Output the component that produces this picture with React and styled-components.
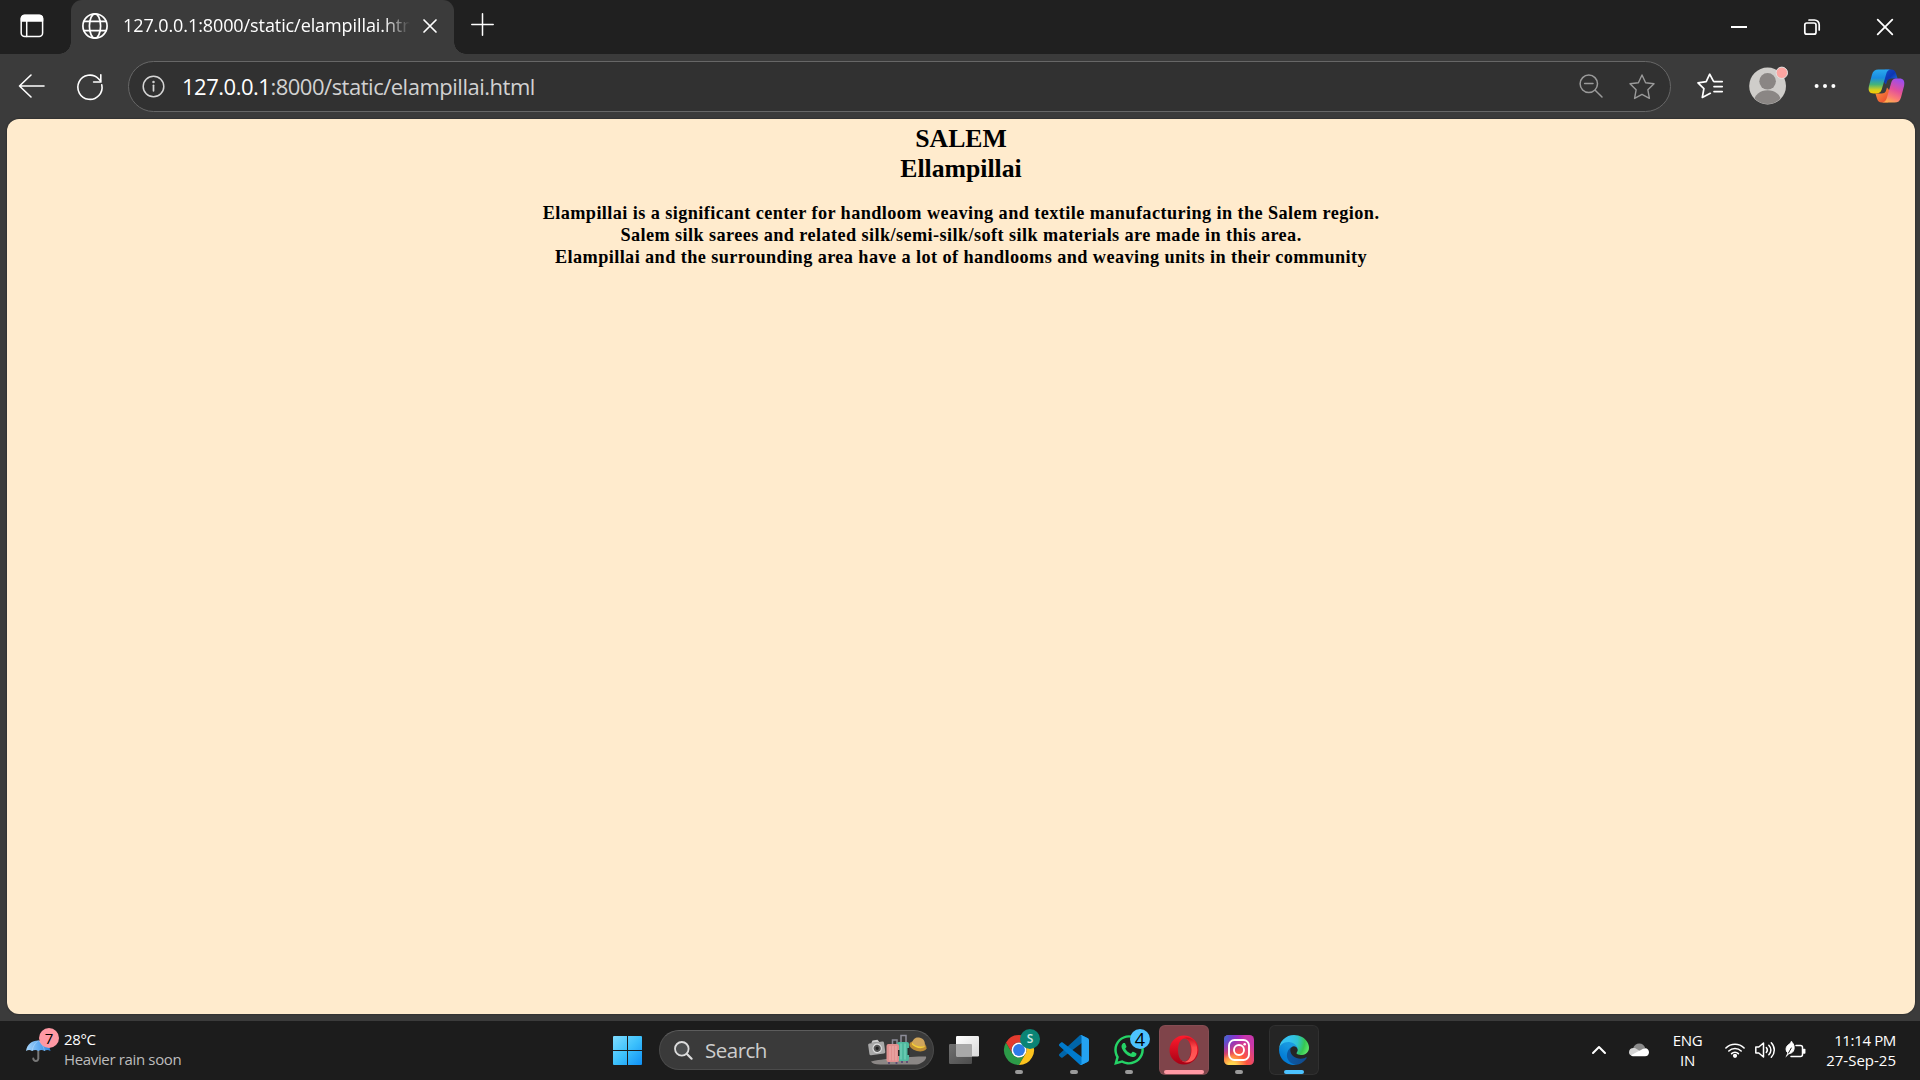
import React from "react";
import styled, { createGlobalStyle, css } from "styled-components";
import { FaWhatsapp } from "react-icons/fa";

const GlobalStyle = createGlobalStyle`
  * { box-sizing: border-box; }
  body { margin: 0; background: #3b3b3b; overflow: hidden; }
  svg { display: block; flex: none; overflow: visible; }
`;

const Screen = styled.div`
  display: flex;
  flex-direction: column;
  width: 1920px;
  height: 1080px;
  background: #3b3b3b;
  font-family: "Open Sans", "Noto Sans", sans-serif;
  color: #fff;
`;

/* ---------- tab strip ---------- */

const TabStrip = styled.header`
  display: flex;
  align-items: stretch;
  height: 54px;
  background: #202020;
`;

const StripButton = styled.button`
  display: flex;
  align-items: center;
  justify-content: center;
  width: ${(p) => p.$width}px;
  padding: ${(p) => p.$pad || "0"};
  border: 0;
  background: none;
  color: #fff;
`;

const Tab = styled.div`
  position: relative;
  display: flex;
  align-items: center;
  width: 383px;
  padding: 0 17px 2px 11px;
  border-radius: 11px 11px 0 0;
  background: #3b3b3b;

  &::before,
  &::after {
    content: "";
    position: absolute;
    bottom: 0;
    width: 12px;
    height: 12px;
  }
  &::before {
    left: -12px;
    background: radial-gradient(circle at 0 0, #202020 11.5px, #3b3b3b 12px);
  }
  &::after {
    right: -12px;
    background: radial-gradient(circle at 100% 0, #202020 11.5px, #3b3b3b 12px);
  }
`;

const TabTitle = styled.span`
  flex: 1;
  margin: 0 13px 0 15px;
  padding-bottom: 2px;
  overflow: hidden;
  white-space: nowrap;
  font-size: 18px;
  line-height: 26px;
  letter-spacing: -0.09px;
  mask-image: linear-gradient(to right, #000 calc(100% - 26px), transparent);
`;

const Spacer = styled.div`
  flex: 1;
`;

/* ---------- toolbar ---------- */

const Toolbar = styled.nav`
  display: flex;
  align-items: center;
  height: 65px;
  padding: 0 14px 0 18px;
`;

const BackSlot = styled.div`
  margin-right: 32px;
  padding-bottom: 1px;
`;

const AddressBar = styled.div`
  display: flex;
  align-items: center;
  width: 1543px;
  height: 51px;
  margin-left: 25px;
  padding: 0 15px 0 13px;
  border: 1px solid #676767;
  border-radius: 26px;
  background: #313131;
  color: #9a9a9a;
`;

const Url = styled.div`
  flex: 1;
  margin-left: 17px;
  padding-bottom: 2px;
  font-size: 22px;
  line-height: 30px;
  letter-spacing: -0.49px;
  color: #d2d2d2;
`;

const Host = styled.span`
  color: #fff;
`;

const AddressActions = styled.div`
  display: flex;
  gap: 26px;
`;

const ToolbarActions = styled.div`
  display: flex;
  align-items: center;
  width: 208px;
  margin-left: 26px;
  padding-bottom: 1px;
`;

const ActionSlot = styled.div`
  margin-right: ${(p) => p.$gap}px;
`;

/* ---------- page ---------- */

const Page = styled.main`
  flex: 1;
  margin: 0 5px 7px 7px;
  padding-top: 5px;
  border-radius: 12px;
  background: #ffebcd;
  box-shadow: 0 0 2px rgba(0, 0, 0, 0.5);
  color: #000;
  text-align: center;
  font-family: "Liberation Serif", "Times New Roman", serif;
`;

const Heading = styled.h3`
  margin: 0 0 18px;
  font-size: 25.74px;
  line-height: 30px;
`;

const Description = styled.h5`
  margin: 0;
  font-size: 18.26px;
  line-height: 22px;
  letter-spacing: 0.405px;
`;

/* ---------- taskbar ---------- */

const Taskbar = styled.footer`
  display: grid;
  grid-template-columns: 602px auto 1fr;
  height: 59px;
  background: #1c1c1c;
`;

const Weather = styled.div`
  display: flex;
  align-items: center;
  padding: 0 0 3px 26px;
`;

const WeatherIcon = styled.div`
  position: relative;
  margin: 3px 13px 0 0;
`;

const Badge = styled.span`
  position: absolute;
  top: ${(p) => p.$top}px;
  left: ${(p) => p.$left}px;
  width: 20px;
  height: 20px;
  border-radius: 50%;
  background: ${(p) => p.$bg};
  color: ${(p) => p.$fg || "#000"};
  font-size: ${(p) => p.$size || 15}px;
  font-weight: ${(p) => p.$weight || 400};
  line-height: 20px;
  text-align: center;
`;

const Lines = styled.div`
  display: flex;
  flex-direction: column;
  align-items: ${(p) => p.$align || "flex-start"};
  font-size: 15px;
  line-height: 20px;
  letter-spacing: -0.35px;
  white-space: nowrap;
`;

const Muted = styled.span`
  color: #bdbdbd;
`;

const Steady = styled.span`
  letter-spacing: 0;
`;

const Apps = styled.div`
  display: flex;
  align-items: center;
  gap: 5px;
  padding-bottom: 1px;
`;

const AppTile = styled.div`
  position: relative;
  display: flex;
  align-items: center;
  justify-content: center;
  width: 50px;
  height: 50px;
  border-radius: 6px;
  ${(p) =>
    p.$tile &&
    css`
      background: ${p.$tile};
      box-shadow: inset 0 0 0 1px rgba(255, 255, 255, 0.05);
    `}
`;

const Indicator = styled.span`
  position: absolute;
  bottom: 1px;
  left: 50%;
  width: ${(p) => p.$width || 8}px;
  height: 4px;
  border-radius: 2px;
  background: ${(p) => p.$color || "#9a9a9a"};
  transform: translateX(-50%);
`;

const SearchBox = styled.div`
  display: flex;
  align-items: center;
  width: 275px;
  height: 40px;
  margin-left: 2px;
  padding: 0 5px 0 14px;
  border: 1px solid #4b4b4b;
  border-top-color: #5c5c5c;
  border-radius: 20px;
  background: #3a3a3a;
`;

const SearchLabel = styled.span`
  flex: 1;
  margin-left: 12px;
  color: #cdcdcd;
  font-size: 20.5px;
  line-height: 28px;
  letter-spacing: -0.5px;
`;

const Tray = styled.div`
  display: flex;
  align-items: center;
  justify-content: flex-end;
  padding: 0 24px 2px 0;
`;

const TraySlot = styled.div`
  margin: ${(p) => p.$drop || 0}px ${(p) => p.$gap}px 0 0;
`;

/* ---------- icons ---------- */

const Line = ({ w, h, sw = 1.5, children }) => (
  <svg
    width={w}
    height={h}
    viewBox={`0 0 ${w} ${h}`}
    fill="none"
    stroke="currentColor"
    strokeWidth={sw}
    strokeLinecap="round"
    strokeLinejoin="round"
  >
    {children}
  </svg>
);

const PanelIcon = () => (
  <Line w={24} h={24}>
    <rect x="1.2" y="1.2" width="21.4" height="21.4" rx="3.5" />
    <path d="M1.5 7V4.5a3 3 0 0 1 3-3h15a3 3 0 0 1 3 3V7z" fill="currentColor" />
    <path d="M6.7 7v15.5" />
  </Line>
);

const GlobeIcon = () => (
  <Line w={26} h={26} sw={1.7}>
    <circle cx="13" cy="13" r="12.1" />
    <ellipse cx="13" cy="13" rx="5.6" ry="12.1" />
    <path d="M2 8.3h22M2 17.7h22" />
  </Line>
);

const CloseTabIcon = () => (
  <Line w={14} h={14} sw={1.7}>
    <path d="M1 1l12 12M13 1L1 13" />
  </Line>
);

const PlusIcon = () => (
  <Line w={23} h={23} sw={1.5}>
    <path d="M11.5 .8v21.4M.8 11.5h21.4" />
  </Line>
);

const MinimizeIcon = () => (
  <Line w={16} h={16} sw={2}>
    <path d="M0 8h16" strokeLinecap="butt" />
  </Line>
);

const RestoreIcon = () => (
  <Line w={16} h={16} sw={1.7}>
    <rect x=".8" y="4" width="11.2" height="11.2" rx="2" />
    <path d="M5 1h5.500a4.700 4.700 0 0 1 4.700 4.700v5.300" />
  </Line>
);

const CloseIcon = () => (
  <Line w={16} h={16} sw={1.8}>
    <path d="M.7 .7l14.6 14.6M15.3 .7L.7 15.3" />
  </Line>
);

const BackIcon = () => (
  <Line w={27} h={26} sw={1.6}>
    <path d="M26 13H1.500M13 2L1.500 13 13 24" />
  </Line>
);

const RefreshIcon = () => (
  <Line w={26} h={26} sw={1.6}>
    <path d="M24.800 10.800A12.100 12.100 0 1 1 21.500 4.700L23.600 7" />
    <path d="M23.800 .8V8H16.600" strokeLinejoin="miter" />
  </Line>
);

const InfoIcon = () => (
  <Line w={23} h={23} sw={1.500}>
    <g stroke="#d5d5d5">
      <circle cx="11.500" cy="11.500" r="10.300" />
      <path d="M11.500 10.300v5.500" strokeWidth="1.700" />
      <circle cx="11.500" cy="7" r=".5" fill="#d5d5d5" />
    </g>
  </Line>
);

const ZoomOutIcon = () => (
  <Line w={24} h={24} sw={1.500}>
    <circle cx="9.800" cy="9.800" r="8.700" />
    <path d="M16.200 16.200L23 23M5.600 9.500h8.400" />
  </Line>
);

const StarIcon = () => (
  <Line w={26} h={26} sw={1.400}>
    <path d="M13 1l3.600 7.800 8.400 1-6.100 6 1.500 8.600-7.400-4-7.400 4 1.500-8.600-6.100-6 8.400-1z" />
  </Line>
);

const FavoritesIcon = () => (
  <Line w={26} h={26} sw={1.700}>
    <path d="M16.400 8.200L12.700 1.200 9.200 8.600 1 9.900l5.900 5.800-1.600 8.800 8-4.200" />
    <path d="M17 8.600h8.200M17 13.600h8.200M17 18.600h8.200" />
  </Line>
);

const AvatarIcon = () => (
  <svg width="38" height="38" viewBox="0 0 38 38">
    <clipPath id="face">
      <circle cx="18.6" cy="19" r="18" />
    </clipPath>
    <circle cx="18.6" cy="19" r="18.4" fill="#cfcdca" />
    <g clipPath="url(#face)" fill="#8a8684">
      <circle cx="18.6" cy="14.3" r="8.3" />
      <ellipse cx="18.6" cy="34" rx="13.5" ry="10.7" />
    </g>
    <circle cx="32.8" cy="5.8" r="5.7" fill="#fca4a0" stroke="#e3e1df" strokeWidth="1" />
  </svg>
);

const DotsIcon = () => (
  <svg width="22" height="6" viewBox="0 0 22 6" fill="#fff">
    <circle cx="2.6" cy="3" r="2" />
    <circle cx="11" cy="3" r="2" />
    <circle cx="19.4" cy="3" r="2" />
  </svg>
);

const CopilotIcon = () => (
  <svg width="37" height="34" viewBox="0 0 37 34">
    <defs>
      <linearGradient id="cpLeft" x1="0" y1="0" x2="0" y2="1">
        <stop offset="0" stopColor="#2aa9ee" />
        <stop offset=".35" stopColor="#1a8ce0" />
        <stop offset=".62" stopColor="#43b37b" />
        <stop offset=".85" stopColor="#d3cf1f" />
        <stop offset="1" stopColor="#fdc900" />
      </linearGradient>
      <linearGradient id="cpRight" x1=".7" y1="0" x2=".3" y2="1">
        <stop offset="0" stopColor="#9b4df0" />
        <stop offset=".45" stopColor="#e2509b" />
        <stop offset=".75" stopColor="#fb7a75" />
        <stop offset="1" stopColor="#ffb04e" />
      </linearGradient>
      <linearGradient id="cpTop" x1="0" y1="0" x2="1" y2="1">
        <stop offset="0" stopColor="#1552c9" />
        <stop offset=".5" stopColor="#0d36b4" />
        <stop offset="1" stopColor="#2283ec" />
      </linearGradient>
      <linearGradient id="cpBottom" x1="0" y1="0" x2="1" y2="1">
        <stop offset="0" stopColor="#ff9a3d" />
        <stop offset="1" stopColor="#e8402e" />
      </linearGradient>
    </defs>
    <path d="M17 .5h6c3 0 4.2 1.3 5 4l1.6 5h-5.800c-3 0-4.400 1-5.200 4l-.6 2-4-5z" fill="url(#cpTop)" />
    <path d="M20 33.500h-6c-3 0-4.200-1.300-5-4l-1.600-5h5.800c3 0 4.400-1 5.200-4l.6-2 4 5z" fill="url(#cpBottom)" />
    <path d="M10.500 .5H23c-2.600 0-4 1.600-4.800 4.400L14 19.600c-1 3.600-2.600 4.900-6 4.900H5.600c-4 0-5.700-2.600-4.700-7.200L4 5.600C5 2 7 .5 10.500 .5z" fill="url(#cpLeft)" />
    <path d="M26.500 33.500H14c2.600 0 4-1.600 4.800-4.400L23 14.400c1-3.600 2.600-4.900 6-4.900h2.400c4 0 5.700 2.600 4.700 7.200L33 28.400c-1 3.600-3 5.100-6.500 5.100z" fill="url(#cpRight)" />
  </svg>
);

const UmbrellaIcon = () => (
  <svg width="25" height="24" viewBox="0 0 25 24">
    <defs>
      <linearGradient id="umb" x1="0" x2="1">
        <stop offset="0" stopColor="#a9d6fb" />
        <stop offset=".5" stopColor="#64adf2" />
        <stop offset="1" stopColor="#2c84da" />
      </linearGradient>
    </defs>
    <path d="M12.300 10v9.400a2.500 2.500 0 0 1-5 .2" fill="none" stroke="#777" strokeWidth="2" strokeLinecap="round" />
    <path d="M0 12C1 5.500 6 1.500 12.200 1.500S23.500 5.500 24.500 12q-3.500-1.800-6 0-3-1.800-6.200 0-3-1.800-6.200 0-3-1.800-6.100 0z" fill="url(#umb)" />
    <path d="M12.300 1.500Q7 5.500 6.100 12M12.300 1.500Q17.500 5.500 18.500 12" fill="none" stroke="#d3ebff" strokeOpacity=".5" strokeWidth=".7" />
  </svg>
);

const WindowsIcon = () => (
  <svg width="29" height="29" viewBox="0 0 29 29">
    <defs>
      <linearGradient id="win" x1="0" y1="0" x2="29" y2="29" gradientUnits="userSpaceOnUse">
        <stop offset="0" stopColor="#7fdcff" />
        <stop offset=".5" stopColor="#3dc1fc" />
        <stop offset="1" stopColor="#0f90f5" />
      </linearGradient>
    </defs>
    <path d="M1 0h13v14H0V1a1 1 0 0 1 1-1zM15 0h13a1 1 0 0 1 1 1v13H15zM0 15h14v14H1a1 1 0 0 1-1-1zM15 15h14v13a1 1 0 0 1-1 1H15z" fill="url(#win)" />
  </svg>
);

const SearchIcon = () => (
  <svg width="19" height="19" viewBox="0 0 19 19" fill="none" stroke="#dcdcdc" strokeLinecap="round">
    <circle cx="7.800" cy="7.800" r="6.800" fill="#4d4f50" strokeWidth="1.800" />
    <path d="M12.900 13l4.700 4.700" strokeWidth="2.200" />
  </svg>
);

const TravelIcon = () => (
  <svg width="61" height="33" viewBox="0 0 61 33">
    <path d="M4 27.500C14 25 40 22.500 59 22.500c1 2-3 7-9 8H13c-5 0-8-1-9-3z" fill="#8b8786" />
    <g transform="rotate(-8 9 13)">
      <rect x="1.500" y="8.500" width="16" height="12" rx="1.500" fill="#a9a9a9" />
      <path d="M5 8.500l1.500-2.500h5l1.500 2.500z" fill="#cfcfcf" />
      <circle cx="10" cy="14.500" r="4.200" fill="#555" stroke="#ddd" strokeWidth="1.200" />
      <circle cx="10" cy="14.500" r="1.600" fill="#222" />
    </g>
    <path d="M34 9V1.500h5V9M25.500 10V6h4.500v4" fill="none" stroke="#8d8d99" strokeWidth="1.500" />
    <rect x="30" y="8" width="12" height="19" rx="2" fill="#4fb99f" />
    <path d="M34 9.500v16M38 9.500v16" stroke="#8ee0ca" strokeWidth=".8" />
    <rect x="40.500" y="14" width="2" height="7" fill="#262c2b" />
    <rect x="19.500" y="10" width="12.500" height="18" rx="2" fill="#e0908f" />
    <path d="M23 12v14.500M26 12v14.500M29 12v14.500" stroke="#f3b8b5" strokeWidth=".8" />
    <rect x="31" y="16" width="1.500" height="6" fill="#302626" />
    <path d="M22 28v2M29.500 28v2M35 27v2M40 27v2" stroke="#5d4a75" strokeWidth="1.800" />
    <g transform="rotate(14 51 10)">
      <ellipse cx="51.500" cy="12" rx="8.800" ry="5" fill="#bd8c35" />
      <path d="M45 10.500C45 5 48 3.500 51.500 3.500S58 6 58 10.500c-3 2.500-10 2.500-13 0z" fill="#d0a55c" />
      <path d="M45 10c3 2.800 10 2.800 13 0v1.700c-3 2.700-10 2.700-13 0z" fill="#f4cf38" />
    </g>
  </svg>
);

const TaskViewIcon = () => (
  <svg width="30" height="28" viewBox="0 0 30 28">
    <defs>
      <linearGradient id="tvA" x1="0" y1="0" x2="1" y2="1">
        <stop offset="0" stopColor="#fff" />
        <stop offset="1" stopColor="#d9d9d9" />
      </linearGradient>
      <linearGradient id="tvB" x1="0" y1="0" x2="1" y2="1">
        <stop offset="0" stopColor="#707070" />
        <stop offset="1" stopColor="#4c4c4c" />
      </linearGradient>
    </defs>
    <rect x="0" y="8" width="23" height="20" rx="1.200" fill="url(#tvB)" />
    <rect x="7" y="0" width="23" height="20.500" rx="1.200" fill="url(#tvA)" />
    <path d="M7 8h15a1 1 0 0 1 1 1v11.500H8.200a1.200 1.200 0 0 1-1.200-1.200z" fill="#a9a9a9" />
  </svg>
);

const ChromeIcon = () => (
  <svg width="30" height="30" viewBox="0 0 48 48">
    <path d="M13.600 30L3.200 12A24 24 0 0 0 24 48L34.400 30A12 12 0 0 1 13.600 30z" fill="#2c9a48" />
    <path d="M34.400 30L24 48A24 24 0 0 0 44.800 12H24A12 12 0 0 1 34.400 30z" fill="#fcc31e" />
    <path d="M24 12H44.800A24 24 0 0 0 3.200 12L13.600 30A12 12 0 0 1 24 12z" fill="#e33b2e" />
    <circle cx="24" cy="24" r="12" fill="#fff" />
    <circle cx="24" cy="24" r="9.500" fill="#2f7be8" />
  </svg>
);

const CodeIcon = () => (
  <svg width="30" height="30" viewBox="0 0 100 100">
    <path d="M96.4614 10.7962L75.8569 0.875542C73.4719 -0.272773 70.6217 0.211611 68.75 2.08333L1.29858 63.5832C-0.515693 65.2373 -0.513607 68.0937 1.30308 69.7452L6.81272 74.754C8.29793 76.1042 10.5347 76.2036 12.1338 74.9905L93.3609 13.3699C96.086 11.3026 100 13.2462 100 16.6667V16.4275C100 14.0265 98.6246 11.8378 96.4614 10.7962Z" fill="#0065a9" />
    <path d="M96.4614 89.2038L75.8569 99.1245C73.4719 100.273 70.6217 99.7884 68.75 97.9167L1.29858 36.4169C-0.515693 34.7627 -0.513607 31.9063 1.30308 30.2548L6.81272 25.246C8.29793 23.8958 10.5347 23.7964 12.1338 25.0095L93.3609 86.6301C96.086 88.6974 100 86.7538 100 83.3334V83.5726C100 85.9735 98.6246 88.1622 96.4614 89.2038Z" fill="#007acc" />
    <path d="M75.8578 99.1263C73.4721 100.274 70.6219 99.7885 68.75 97.9166C71.0564 100.223 75 98.5895 75 95.3278V4.67213C75 1.41039 71.0564 -0.223106 68.75 2.08329C70.6219 0.211402 73.4721 -0.273666 75.8578 0.873633L96.4587 10.7807C98.6234 11.8217 100 14.0112 100 16.4132V83.5871C100 85.9891 98.6234 88.1786 96.4586 89.2196L75.8578 99.1263Z" fill="#24a2f2" />
  </svg>
);

const OperaIcon = () => (
  <svg width="30" height="30" viewBox="0 0 30 30">
    <defs>
      <linearGradient id="opA" x1="0" y1="0" x2="0" y2="1">
        <stop offset="0" stopColor="#ff1b2d" />
        <stop offset="1" stopColor="#a70014" />
      </linearGradient>
      <linearGradient id="opB" x1="0" y1="0" x2="0" y2="1">
        <stop offset="0" stopColor="#c4101f" />
        <stop offset=".4" stopColor="#ff4b4b" />
        <stop offset="1" stopColor="#ff5f5c" />
      </linearGradient>
    </defs>
    <path d="M15 .5a14.400 14.400 0 1 0 0 29 14.400 14.400 0 1 0 0-29zM15.500 3.500c3.800 0 6.300 5 6.300 11.500s-2.500 11.500-6.300 11.500S9 21.500 9 15s2.700-11.500 6.500-11.500z" fillRule="evenodd" fill="url(#opA)" />
    <path d="M10.500 6c1.300-1.700 3.200-2.700 5-2.700 4 0 7 5.200 7 11.700s-3 11.700-7 11.700c-1.800 0-3.700-1-5-2.700 3.500 4.300 9.500 4.800 14 .8A14.400 14.400 0 0 0 24.500 5.200c-4.500-4-10.500-3.500-14 .8z" fill="url(#opB)" />
  </svg>
);

const InstagramIcon = () => (
  <svg width="30" height="30" viewBox="0 0 30 30">
    <defs>
      <radialGradient id="igA" cx=".27" cy="1.07" r="1">
        <stop offset="0" stopColor="#ffdd55" />
        <stop offset=".15" stopColor="#ffd44f" />
        <stop offset=".5" stopColor="#ff543e" />
        <stop offset="1" stopColor="#c837ab" />
      </radialGradient>
      <radialGradient id="igB" cx="-.1" cy="0" r=".8">
        <stop offset="0" stopColor="#3771c8" />
        <stop offset=".25" stopColor="#4b60d0" />
        <stop offset="1" stopColor="#6600ff" stopOpacity="0" />
      </radialGradient>
    </defs>
    <rect width="30" height="30" rx="4.500" fill="url(#igA)" />
    <rect width="30" height="30" rx="4.500" fill="url(#igB)" />
    <g fill="none" stroke="#fff" strokeWidth="1.900">
      <rect x="5" y="5" width="20" height="20" rx="5.500" />
      <circle cx="15" cy="15" r="5" />
    </g>
    <circle cx="20.700" cy="9.300" r="1.300" fill="#fff" />
  </svg>
);

const EdgeIcon = () => (
  <svg width="30" height="30" viewBox="0 0 256 256">
    <defs>
      <linearGradient id="edA" x1=".2" y1=".5" x2="1" y2=".6">
        <stop offset="0" stopColor="#0c59a4" />
        <stop offset="1" stopColor="#114a8b" />
      </linearGradient>
      <linearGradient id="edB" x1=".8" y1=".1" x2=".3" y2="1">
        <stop offset="0" stopColor="#1b9de2" />
        <stop offset=".3" stopColor="#1595df" />
        <stop offset=".7" stopColor="#0680d7" />
        <stop offset="1" stopColor="#0078d4" />
      </linearGradient>
      <radialGradient id="edC" cx="26" cy="46" r="250" gradientUnits="userSpaceOnUse">
        <stop offset="0" stopColor="#35c1f1" />
        <stop offset=".3" stopColor="#34c1ed" />
        <stop offset=".55" stopColor="#2fc2cf" />
        <stop offset=".8" stopColor="#36c752" />
        <stop offset="1" stopColor="#66eb6e" />
      </radialGradient>
    </defs>
    <g transform="translate(-4.630 -4.920)">
      <path d="M235.680 195.460a93.730 93.730 0 0 1-10.540 4.710 101.870 101.870 0 0 1-35.900 6.460c-47.320 0-88.540-32.550-88.540-74.320A31.480 31.480 0 0 1 117.130 105c-42.800 1.800-53.800 46.400-53.800 72.530 0 73.880 68.090 81.370 82.760 81.370 7.910 0 19.840-2.300 27-4.560l1.310-.44a128.340 128.340 0 0 0 66.600-52.800 4 4 0 0 0-5.320-5.640z" fill="url(#edA)" />
      <path d="M110.340 246.340A79.200 79.200 0 0 1 87.600 225a80.720 80.720 0 0 1 29.530-120c3.120-1.470 8.450-4.130 15.540-4a32.350 32.350 0 0 1 25.690 13 31.880 31.880 0 0 1 6.360 18.660c0-.21 24.460-79.600-80-79.600-43.900 0-80 41.660-80 78.210a130.150 130.150 0 0 0 12.110 56 128 128 0 0 0 156.380 67.110 75.550 75.550 0 0 1-62.780-8z" fill="url(#edB)" />
      <path d="M156.940 153.780c-.81 1.050-3.300 2.500-3.300 5.660 0 2.610 1.700 5.120 4.720 7.230 14.380 10 41.490 8.680 41.560 8.680a59.560 59.560 0 0 0 30.270-8.350 61.380 61.380 0 0 0 30.430-52.880c.26-22.410-8-37.310-11.340-43.910C228.090 28.760 182.350 4.920 132.610 4.920a128 128 0 0 0-128 126.200c.48-36.540 36.800-66.050 80-66.050 3.500 0 23.460.34 42 10.070 16.340 8.580 24.900 18.940 30.850 29.210 6.180 10.670 7.280 24.150 7.280 29.520s-2.740 13.330-7.800 19.910z" fill="url(#edC)" />
    </g>
  </svg>
);

const ChevronIcon = () => (
  <Line w={14} h={8} sw={2}>
    <path d="M1 7l6-6 6 6" />
  </Line>
);

const CloudIcon = () => (
  <svg width="20" height="14" viewBox="0 0 20 14">
    <path d="M4 5.500C5 2 7.500.5 10.200.5c3 0 5.300 1.800 6 4.500L10 8z" fill="#8b8b8b" />
    <path d="M0 9.200C0 6.500 2 5 4.500 5c1.500 0 2.500.5 3.500 1.200l4 2.300-9 4C1 12.300 0 11 0 9.200z" fill="#d4d4d4" />
    <path d="M2 12.300L13.500 6c1-.6 1.800-.8 2.800-.8C18.500 5.200 20 7 20 9.200 20 11.500 18.500 13.300 16 13.300H4.500c-1 0-2-.4-2.500-1z" fill="#fff" />
  </svg>
);

const WifiIcon = () => (
  <Line w={20} h={16} sw={1.600}>
    <path d="M.9 6a13 13 0 0 1 18.200 0M3.800 9a8.800 8.800 0 0 1 12.400 0M6.600 11.700a4.900 4.900 0 0 1 6.800 0" />
    <circle cx="10" cy="13.800" r="1.300" fill="currentColor" />
  </Line>
);

const VolumeIcon = () => (
  <Line w={20} h={18} sw={1.500}>
    <path d="M.8 6v6h3l4.700 4V2L3.800 6z" />
    <path d="M11.300 6.500c1.300 1.500 1.300 3.500 0 5M13.800 4.200c2.800 2.800 2.800 6.800 0 9.600M16.300 1.700c4 4.200 4 10.400 0 14.600" />
  </Line>
);

const BatteryIcon = () => (
  <Line w={21} h={18} sw={1.500}>
    <path d="M11 4.500h4.500A2 2 0 0 1 17.500 6.500v7a2 2 0 0 1-2 2H6" />
    <path d="M18.500 8.500h1.200v3.500h-1.200z" fill="currentColor" />
    <path d="M6.500.8c2.500 2 3 5 2.500 7.500-.5 2.700-2.500 4.200-5 4.200L1 15.500M4 12.500C.5 11 .3 7 2.500 4.500 4 3 5.800 2.500 6.500.8z" fill="currentColor" strokeWidth="1" />
    <path d="M6.300 7L3.500 12" stroke="#1c1c1c" strokeWidth="1" />
  </Line>
);

/* ---------- content ---------- */

const headingLines = ["SALEM", "Ellampillai"];

const descriptionLines = [
  "Elampillai is a significant center for handloom weaving and textile manufacturing in the Salem region.",
  "Salem silk sarees and related silk/semi-silk/soft silk materials are made in this area.",
  "Elampillai and the surrounding area have a lot of handlooms and weaving units in their community",
];

const runningApps = [
  { id: "taskview", icon: <TaskViewIcon /> },
  {
    id: "chrome",
    icon: <ChromeIcon />,
    dot: {},
    badge: { text: "S", $bg: "#0b8475", $fg: "#cfe9e4", $size: 12, $weight: 600 },
  },
  { id: "code", icon: <CodeIcon />, dot: {} },
  {
    id: "whatsapp",
    icon: <FaWhatsapp size={34} color="#25d366" />,
    dot: {},
    badge: { text: "4", $bg: "#4cc2ff", $size: 18 },
  },
  { id: "opera", icon: <OperaIcon />, tile: "#7f444a", dot: { $width: 40, $color: "#ff99a4" } },
  { id: "instagram", icon: <InstagramIcon />, dot: {} },
  { id: "edge", icon: <EdgeIcon />, tile: "#252525", dot: { $width: 20, $color: "#4cc2ff" } },
];

export default function App() {
  return (
    <Screen>
      <GlobalStyle />
      <TabStrip>
        <StripButton $width={71} $pad="0 7px 3px 0">
          <PanelIcon />
        </StripButton>
        <Tab>
          <GlobeIcon />
          <TabTitle>127.0.0.1:8000/static/elampillai.html</TabTitle>
          <CloseTabIcon />
        </Tab>
        <StripButton $width={57} $pad="0 0 5px 0">
          <PlusIcon />
        </StripButton>
        <Spacer />
        <StripButton $width={74}>
          <MinimizeIcon />
        </StripButton>
        <StripButton $width={72}>
          <RestoreIcon />
        </StripButton>
        <StripButton $width={72} $pad="0 0 0 2px">
          <CloseIcon />
        </StripButton>
      </TabStrip>

      <Toolbar>
        <BackSlot>
          <BackIcon />
        </BackSlot>
        <RefreshIcon />
        <AddressBar>
          <InfoIcon />
          <Url>
            <Host>127.0.0.1</Host>:8000/static/elampillai.html
          </Url>
          <AddressActions>
            <ZoomOutIcon />
            <StarIcon />
          </AddressActions>
        </AddressBar>
        <ToolbarActions>
          <ActionSlot $gap={26}>
            <FavoritesIcon />
          </ActionSlot>
          <ActionSlot $gap={27}>
            <AvatarIcon />
          </ActionSlot>
          <ActionSlot $gap={32}>
            <DotsIcon />
          </ActionSlot>
          <CopilotIcon />
        </ToolbarActions>
      </Toolbar>

      <Page>
        <Heading>
          {headingLines.map((line) => (
            <div key={line}>{line}</div>
          ))}
        </Heading>
        <Description>
          {descriptionLines.map((line) => (
            <div key={line}>{line}</div>
          ))}
        </Description>
      </Page>

      <Taskbar>
        <Weather>
          <WeatherIcon>
            <UmbrellaIcon />
            <Badge $top={-11} $left={13} $bg="#ff99a4">
              7
            </Badge>
          </WeatherIcon>
          <Lines>
            <span>28°C</span>
            <Muted>Heavier rain soon</Muted>
          </Lines>
        </Weather>
        <Apps>
          <AppTile>
            <WindowsIcon />
          </AppTile>
          <SearchBox>
            <SearchIcon />
            <SearchLabel>Search</SearchLabel>
            <TravelIcon />
          </SearchBox>
          {runningApps.map(({ id, icon, tile, dot, badge }) => (
            <AppTile key={id} $tile={tile}>
              {icon}
              {badge && (
                <Badge
                  $top={4}
                  $left={26}
                  $bg={badge.$bg}
                  $fg={badge.$fg}
                  $size={badge.$size}
                  $weight={badge.$weight}
                >
                  {badge.text}
                </Badge>
              )}
              {dot && <Indicator {...dot} />}
            </AppTile>
          ))}
        </Apps>
        <Tray>
          <TraySlot $gap={23} $drop={1}>
            <ChevronIcon />
          </TraySlot>
          <TraySlot $gap={24}>
            <CloudIcon />
          </TraySlot>
          <TraySlot $gap={23} $drop={1}>
            <Lines $align="center">
              <span>ENG</span>
              <span>IN</span>
            </Lines>
          </TraySlot>
          <TraySlot $gap={10}>
            <WifiIcon />
          </TraySlot>
          <TraySlot $gap={10}>
            <VolumeIcon />
          </TraySlot>
          <TraySlot $gap={20}>
            <BatteryIcon />
          </TraySlot>
          <Lines $align="flex-end">
            <span>11:14 PM</span>
            <Steady>27-Sep-25</Steady>
          </Lines>
        </Tray>
      </Taskbar>
    </Screen>
  );
}
